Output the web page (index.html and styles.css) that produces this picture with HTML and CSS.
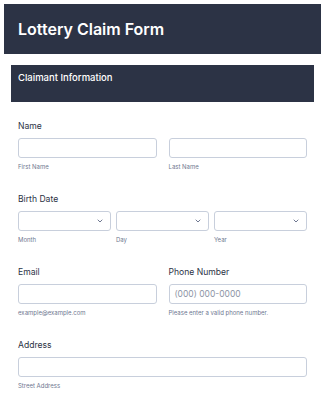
FILE: index.html
```html
<!DOCTYPE html>
<html>
<head>
<meta charset="utf-8">
<link rel="stylesheet" href="styles.css">
</head>
<body>
<div class="page">
  <div class="header"><h1 class="title">Lottery Claim Form</h1></div>
  <div class="form">
    <div class="section"><h2 class="section-title">Claimant Information</h2></div>
    <div class="field">
      <div class="label">Name</div>
      <div class="row two">
        <div class="col"><div class="input"></div><div class="sub">First Name</div></div>
        <div class="col"><div class="input"></div><div class="sub">Last Name</div></div>
      </div>
    </div>
    <div class="field">
      <div class="label">Birth Date</div>
      <div class="row three">
        <div class="col"><div class="input select"><svg class="chev" width="6" height="4" viewBox="0 0 6 4"><path d="M0.7 0.7l2.3 2.3 2.3-2.3" fill="none" stroke="#6f7891" stroke-width="1"/></svg></div><div class="sub">Month</div></div>
        <div class="col"><div class="input select"><svg class="chev" width="6" height="4" viewBox="0 0 6 4"><path d="M0.7 0.7l2.3 2.3 2.3-2.3" fill="none" stroke="#6f7891" stroke-width="1"/></svg></div><div class="sub">Day</div></div>
        <div class="col"><div class="input select"><svg class="chev" width="6" height="4" viewBox="0 0 6 4"><path d="M0.7 0.7l2.3 2.3 2.3-2.3" fill="none" stroke="#6f7891" stroke-width="1"/></svg></div><div class="sub">Year</div></div>
      </div>
    </div>
    <div class="field">
      <div class="row two">
        <div class="col"><div class="label">Email</div><div class="input"></div><div class="sub">example@example.com</div></div>
        <div class="col"><div class="label">Phone Number</div><div class="input"><span class="ph">(000) 000-0000</span></div><div class="sub">Please enter a valid phone number.</div></div>
      </div>
    </div>
    <div class="field">
      <div class="label">Address</div>
      <div class="input"></div>
      <div class="sub">Street Address</div>
    </div>
  </div>
</div>
</body>
</html>
```

FILE: styles.css
```css
* { box-sizing: border-box; }
html, body { margin: 0; padding: 0; background: #fff; }
body { font-family: Inter, "Noto Sans", sans-serif; color: #2c3345; }
.page { padding: 4px 4px 0 4px; }
.header {
  background: #2c3345;
  height: 50px;
  display: flex;
  align-items: center;
  padding-left: 14px;
}
.title { margin: 0; color: #fff; font-size: 16px; font-weight: 600; letter-spacing: 0; }
.form { padding: 11px 7px 0 7px; }
.section {
  background: #2c3345;
  height: 37px;
  padding: 7px 7px 0 7px;
}
.section-title { margin: 0; color: #fff; font-size: 9.5px; font-weight: 500; }
.field { padding: 18px 7px 0 7px; }
.field + .field { padding-top: 22px; }
.label { font-size: 8.6px; font-weight: 400; color: #2c3345; height: 12px; line-height: 12px; margin-bottom: 6px; }
.row { display: flex; }
.row.two { gap: 12px; }
.row.three { gap: 5px; }
.col { flex: 1; min-width: 0; }
.input {
  height: 20px;
  border: 1px solid #c8cfdc;
  border-radius: 3px;
  background: #fff;
  display: flex;
  align-items: center;
  padding: 0 5px;
}
.select { justify-content: flex-end; padding-right: 7px; }
.chev { display: block; }
.ph { font-size: 8.5px; color: #8d94a5; }
.sub { font-size: 6px; color: #6f7891; margin-top: 5px; height: 8px; line-height: 8px; }
```
